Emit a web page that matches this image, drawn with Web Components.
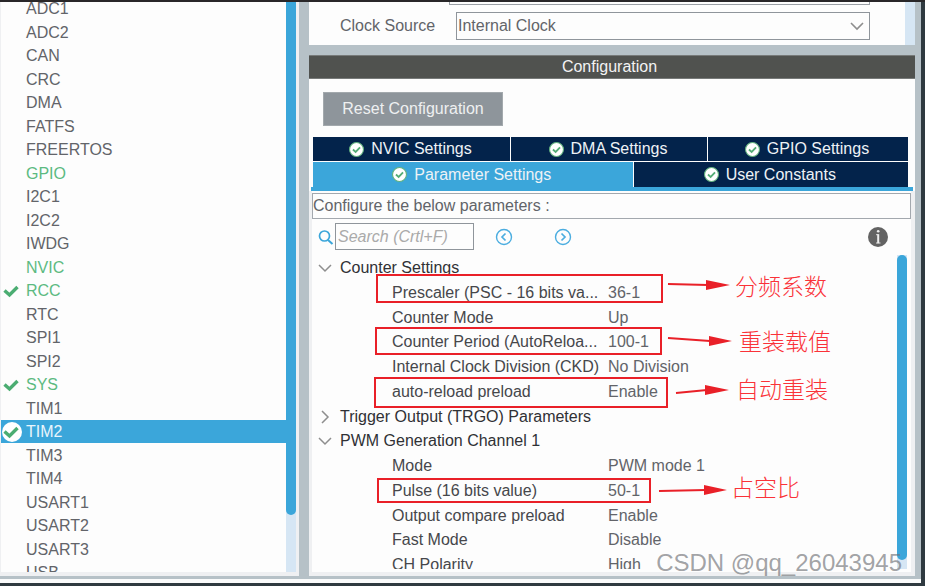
<!DOCTYPE html>
<html lang="zh-CN">
<head>
<meta charset="utf-8">
<title>TIM2 Configuration</title>
<style>
html, body { margin: 0; height: 100%; }
body { font: 16px/24px "Liberation Sans", Arial, "Noto Sans CJK SC", sans-serif; color: #626469; background: #2f3a40; overflow: hidden; }
</style>
</head>
<body>
<cube-app></cube-app>
<script>
const define = (name, html, setup) => {
  const template = document.createElement('template');
  template.innerHTML = '<style>*{box-sizing:border-box}button,input,select{font:inherit;color:inherit;margin:0}</style>' + html;
  customElements.define(name, class extends HTMLElement {
    constructor() {
      super();
      this.attachShadow({ mode: 'open' }).append(template.content.cloneNode(true));
    }
    connectedCallback() { if (setup) setup(this, this.shadowRoot); }
  });
};

define('scroll-rail', `
<style>
:host { display: block; width: 10px; background: #d6e6f4; }
div { height: var(--thumb, 0); background: #3ba6da; border-radius: var(--cap, 5px); }
</style>
<div></div>`);

define('ip-item', `
<style>
:host { display: block; height: 23px; }
:host(:nth-child(even)) { height: 24px; }
a { display: grid; grid-template-columns: 20px 1fr; column-gap: 4px; align-items: center; height: 100%; padding-left: 1px; color: inherit; text-decoration: none; line-height: 23px; }
:host([on]) { color: #5cba81; }
:host([selected]) { background: #3ba6da; color: #e9f5fc; }
svg { display: none; width: 20px; height: 22px; }
:host([on]) svg, :host([selected]) svg { display: block; }
circle { display: none; }
:host([selected]) circle { display: block; }
</style>
<a href="#"><span><svg viewBox="0 0 20 22"><circle cx="10" cy="11" r="10" fill="#fff"/><path d="M2.500 10.500 L7.500 15 L15.500 7" fill="none" stroke="#4bad72" stroke-width="3.400"/></svg></span><span><slot></slot></span></a>`);

define('ip-list', `
<style>
:host { display: grid; grid-template-columns: 1fr 10px; overflow: hidden; background: #fdfdfd; border: solid #eff0f2; border-width: 0 3px 4px 1px; min-height: 0; }
nav { overflow: hidden; margin-top: -5px; min-height: 0; }
scroll-rail { --thumb: 90%; --cap: 0 0 5px 5px; }
</style>
<nav aria-label="Peripherals"></nav><scroll-rail></scroll-rail>`, (host, root) => {
  const on = ['GPIO', 'NVIC'], checked = ['RCC', 'SYS'];
  const nav = root.querySelector('nav');
  'ADC1 ADC2 CAN CRC DMA FATFS FREERTOS GPIO I2C1 I2C2 IWDG NVIC RCC RTC SPI1 SPI2 SYS TIM1 TIM2 TIM3 TIM4 USART1 USART2 USART3 USB'.split(' ').forEach(name => {
    const item = document.createElement('ip-item');
    item.textContent = name;
    if (on.includes(name)) item.style.color = '#5cba81';
    if (checked.includes(name)) item.setAttribute('on', '');
    if (name === 'TIM2') item.setAttribute('selected', '');
    nav.append(item);
  });
});

define('mode-panel', `
<style>
:host { display: grid; grid-template-columns: 1fr 10px; height: 43px; background: #fdfdfd; overflow: hidden; }
.rows { padding-right: 35px; }
.cut { height: 3px; margin-left: 140px; border: solid #9a9fa5; border-width: 0 1px 1px 1px; }
.row { display: grid; grid-template-columns: 116px 1fr; align-items: center; padding-left: 31px; margin-top: 7px; }
.pick { display: grid; position: relative; }
select { appearance: none; height: 28px; border: 1px solid #8f959b; border-radius: 0; background: #fdfdfd; padding: 0 1px; width: 100%; }
svg { position: absolute; right: 6px; top: 9px; width: 14px; height: 10px; pointer-events: none; }
</style>
<div class="rows"><div class="cut"></div>
<div class="row"><label for="clock">Clock Source</label><span class="pick"><select id="clock"><option>Internal Clock</option></select><svg viewBox="0 0 14 10"><path d="M1 2 L7 8 L13 2" fill="none" stroke="#8e8e8e" stroke-width="1.600"/></svg></span></div></div>
<scroll-rail></scroll-rail>`);

define('setting-tab', `
<style>
:host { display: grid; background: #03234b; color: #eef2f6; }
:host([active]) { background: #3ba6da; }
button { display: flex; align-items: center; justify-content: center; gap: 7px; border: 0; background: none; padding: 0 2px 0 0; line-height: 24px; }
svg { width: 15px; height: 15px; }
</style>
<button role="tab"><svg viewBox="0 0 14 14"><circle cx="7" cy="7" r="6.500" fill="#fff" stroke="#60b17d"/><path d="M3.700 7 L6.200 9.300 L10.300 5" fill="none" stroke="#55ad76" stroke-width="1.700"/></svg><slot></slot></button>`);

define('tab-set', `
<style>
:host { display: block; padding: 0 2px; border-bottom: 4px solid #3ba6da; }
div { display: grid; gap: 1px; }
.top { grid-template-columns: 197fr 196fr 200fr; height: 24px; margin: 0 3px 1px 0; }
.low { grid-template-columns: 319fr 274fr; height: 25px; margin-right: 3px; }
</style>
<div class="top" role="tablist"><setting-tab>NVIC Settings</setting-tab><setting-tab>DMA Settings</setting-tab><setting-tab>GPIO Settings</setting-tab></div>
<div class="low" role="tablist"><setting-tab active>Parameter Settings</setting-tab><setting-tab>User Constants</setting-tab></div>`);

define('search-bar', `
<style>
:host { display: flex; align-items: center; padding: 4px 22px 5px 6px; }
label { display: block; width: 16px; height: 16px; margin-right: 1px; }
svg { display: block; }
input { width: 139px; height: 27px; border: 1px solid #8f959b; padding: 0 2px; background: #fdfdfd; border-radius: 0; }
input::placeholder { color: #aaa; font-style: italic; opacity: 1; }
button { border: 0; padding: 0; background: none; }
.prev { margin-left: 21px; }
.next { margin-left: 41px; }
.info { margin-left: auto; }
</style>
<label for="find"><svg width="16" height="16" viewBox="0 0 16 16"><circle cx="6.500" cy="7" r="5" fill="none" stroke="#3ba6da" stroke-width="1.700"/><path d="M10 11 L14.500 15" stroke="#3ba6da" stroke-width="2"/></svg></label>
<input id="find" placeholder="Search (Crtl+F)" aria-label="Search">
<button class="prev" aria-label="Previous"><svg width="18" height="18" viewBox="0 0 18 18" fill="none" stroke="#4bade0"><circle cx="9" cy="9" r="7.500" stroke-width="1.400"/><path d="M10.500 5.500 L7 9 L10.500 12.500" stroke-width="1.700"/></svg></button>
<button class="next" aria-label="Next"><svg width="18" height="18" viewBox="0 0 18 18" fill="none" stroke="#4bade0"><circle cx="9" cy="9" r="7.500" stroke-width="1.400"/><path d="M7.500 5.500 L11 9 L7.500 12.500" stroke-width="1.700"/></svg></button>
<button class="info" aria-label="Information"><svg width="22" height="22" viewBox="0 0 22 22"><circle cx="11" cy="11" r="10" fill="#636363"/><path d="M9 8.700 h2.500 M9 17 h4.500" stroke="#ddd" stroke-width="1" fill="none"/><path d="M11.200 8.200 v9" stroke="#eee" stroke-width="2"/><circle cx="11.200" cy="5.200" r="1.300" fill="#eee"/></svg></button>`);

define('param-tree', `
<style>
:host { display: grid; grid-template-columns: 1fr 10px; min-height: 0; overflow: hidden; padding-right: 4px; }
.view { overflow: hidden; min-height: 0; }
table { border-collapse: collapse; width: 100%; table-layout: fixed; }
col.name { width: 296px; }
td, th { padding: 0; font-weight: normal; text-align: left; white-space: nowrap; line-height: 24px; height: 25px; }
tr:nth-child(4n) > * { height: 24px; }
.leaf th { padding-left: 80px; color: #46474b; }
.group { color: #303135; }
button { display: flex; align-items: center; gap: 8px; border: 0; background: none; padding: 0 0 0 6px; line-height: 24px; }
scroll-rail { --thumb: 97%; }
</style>
<div class="view"><table><colgroup><col class="name"><col></colgroup><tbody></tbody></table></div><scroll-rail></scroll-rail>`, (host, root) => {
  const rows = [
    ['Counter Settings', true],
    ['Prescaler (PSC - 16 bits va...', '36-1'],
    ['Counter Mode', 'Up'],
    ['Counter Period (AutoReloa...', '100-1'],
    ['Internal Clock Division (CKD)', 'No Division'],
    ['auto-reload preload', 'Enable'],
    ['Trigger Output (TRGO) Parameters', false],
    ['PWM Generation Channel 1', true],
    ['Mode', 'PWM mode 1'],
    ['Pulse (16 bits value)', '50-1'],
    ['Output compare preload', 'Enable'],
    ['Fast Mode', 'Disable'],
    ['CH Polarity', 'High']
  ];
  root.querySelector('tbody').innerHTML = rows.map(([name, value]) => typeof value === 'string'
    ? `<tr class="leaf"><th scope="row">${name}</th><td>${value}</td></tr>`
    : `<tr class="group"><th colspan="2"><button aria-expanded="${value}"><svg width="14" height="14" viewBox="0 0 14 14"><path d="${value ? 'M1 4 L7 10 L13 4' : 'M4 1 L10 7 L4 13'}" fill="none" stroke="#8e8e8e" stroke-width="1.500"/></svg>${name}</button></th></tr>`).join('');
});

define('config-panel', `
<style>
:host { display: flex; flex-direction: column; min-height: 0; background: #fdfdfd; }
h2 { margin: 0; height: 24px; background: #50524f; border: solid #777a79; border-width: 1px 0; color: #f3f3f3; font: inherit; line-height: 22px; text-align: center; padding-right: 5px; }
.reset { align-self: flex-start; margin: 13px 0 11px 14px; width: 180px; height: 34px; border: 1px solid #a3a9ad; background: #8e959b; color: #eef0f1; padding: 0; }
tab-set { margin: 0 2px; }
.body { display: flex; flex-direction: column; flex: 1; min-height: 0; border: solid #eff0f2; border-width: 0 4px 4px 3px; padding: 2px 0 3px; }
p { margin: 0; height: 26px; border: 1px solid #a3a8ae; line-height: 24px; }
param-tree { flex: 1; }
</style>
<h2>Configuration</h2>
<button class="reset">Reset Configuration</button>
<tab-set></tab-set>
<div class="body"><p>Configure the below parameters :</p><search-bar></search-bar><param-tree></param-tree></div>`);

define('note-layer', `
<style>
:host { position: absolute; inset: -2px 0 0; pointer-events: none; color: #fa3238; font: 300 23px/24px "Noto Sans CJK SC", sans-serif; }
svg { position: absolute; left: 0; top: 0; overflow: visible; }
span { position: absolute; white-space: nowrap; }
.mark { right: 23px; bottom: 8px; font: 24px/30px "Liberation Sans", sans-serif; color: rgba(110, 112, 116, .65); }
</style>
<svg width="1" height="1"><g fill="none" stroke="#e92028" stroke-width="2"><path d="M377 275H662V302H377zM376 328H661V354H376zM375 378H667V407H375zM378 479H650V502H378z"/><path d="M668 284L708 285M668 338L710 341M676 393L707 390M659 491L706 490"/></g><path fill="#e92028" d="M706 280L730 285L706 290zM709 336L732 341L709 346zM705 385L729 390L705 395zM704 485L727 490L704 495z"/></svg>
<span style="left:735px;top:273px">分频系数</span>
<span style="left:739px;top:328px">重装载值</span>
<span style="left:736px;top:376px">自动重装</span>
<span style="left:731px;top:474px">占空比</span>
<span class="mark">CSDN @qq_26043945</span>`);

define('cube-app', `
<style>
:host { display: block; position: relative; height: 100vh; padding: 0 4px 3px 0; border-top: 2px solid #292729; background: #2f3a40; box-sizing: border-box; }
main { display: grid; grid-template-columns: 299px 1fr; column-gap: 10px; height: 100%; box-sizing: border-box; padding: 0 6px 3px 0; background: #b6c1c7; border-bottom: 4px solid #fafbfb; }
section { display: grid; grid-template-rows: auto 1fr; row-gap: 10px; min-height: 0; min-width: 0; }
ip-list, config-panel { min-height: 0; }
</style>
<main><ip-list></ip-list><section><mode-panel></mode-panel><config-panel></config-panel></section></main>
<note-layer></note-layer>`);
</script>
</body>
</html>
